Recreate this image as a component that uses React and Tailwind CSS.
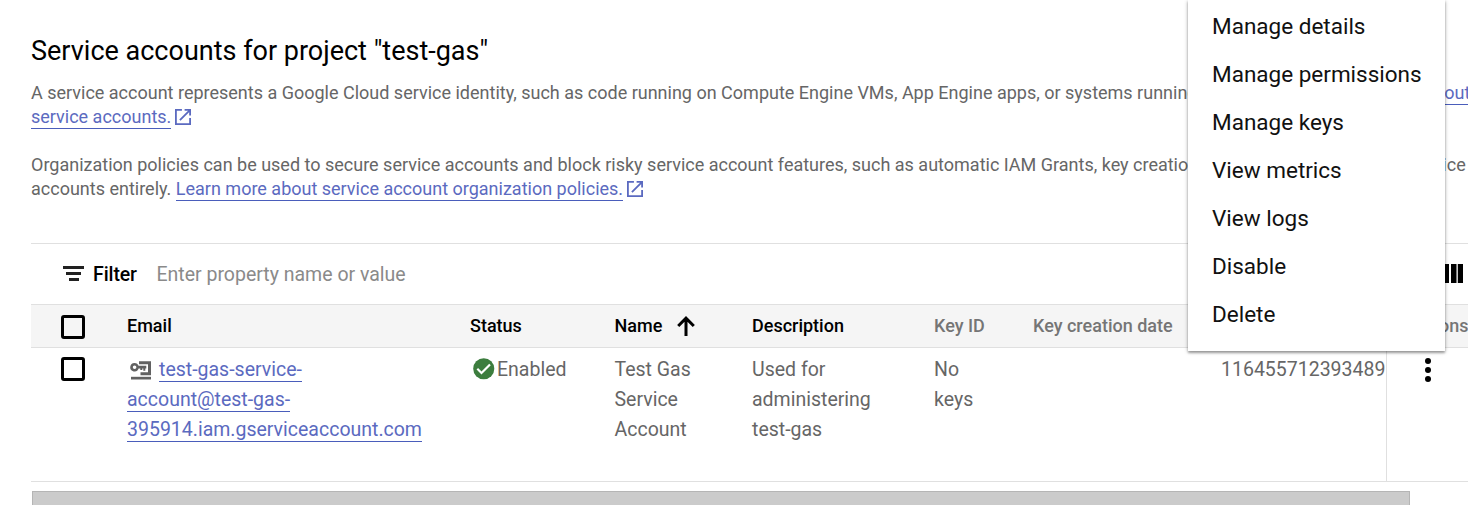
const Link = ({ children }) => (
  <a className="border-b border-[#4a5dbb] pb-px text-[#5b6ac0]">{children}</a>
);

const EmailLink = ({ children }) => (
  <a className="border-b border-[#4a5dbb] text-[#5b6ac0]">{children}</a>
);

const External = () => (
  <svg className="ml-1 inline-block size-[16px] align-[-2px]" viewBox="0 0 15 15" fill="none" stroke="#5b6ac0" strokeWidth="1.7">
    <path d="M6.5 .85H.85v13.3h13.3V8.5M9 .85h5.15V6M14 1L4.6 10.4" />
  </svg>
);

const Checkbox = () => <span className="size-6 shrink-0 rounded-[3px] border-[3px] border-black" />;

const KeyIcon = () => (
  <svg className="mr-[8px] ml-[3px] inline-block h-[19px] w-[21px] align-[-4px]" viewBox="0 0 21 19" fill="#616161">
    <path d="M9 .3h12v14H10.5v-3H18V3.2H9z" />
    <path fillRule="evenodd" d="M4.6 1.9A4.3 4.3 0 0 1 8.6 4.8H16.3v2.8h-1v2.2h-2V7.6h-1v1.500h-2V7.600H8.600A4.300 4.300 0 1 1 4.600 1.900zm0 2.500a1.800 1.800 0 1 0 0 3.600 1.800 1.800 0 0 0 0-3.600z" />
    <path d="M1 15.800h20v2.700H1z" />
  </svg>
);

const COLS = "grid h-full grid-cols-[96px_343px_144.5px_137.5px_182px_99px_188px_165px_1fr]";
const ACTIONS = ["Manage details", "Manage permissions", "Manage keys", "View metrics", "View logs", "Disable", "Delete"];

export default function App() {
  return (
    <div className="relative h-[514px] w-[1468px] overflow-hidden bg-white pl-[31px] font-['Roboto',sans-serif] text-[#666666]">
      <h1 className="pt-[33px] text-[27px] leading-9 text-black">Service accounts for project "test-gas"</h1>
      <div className="mt-3 text-lg leading-6 whitespace-nowrap">
        <p>
          A service account represents a Google Cloud service identity, such as code running on Compute Engine VMs, App Engine apps, or systems running outside Google. <span className="-ml-[3px]"><Link>Learn more about</Link></span>
          <br />
          <Link>service accounts.</Link><External />
        </p>
        <p className="mt-6">
          Organization policies can be used to secure service accounts and block risky service account features, such as automatic IAM Grants, key creation/upload, or the creation of <span className="-ml-px">service</span>
          <br />
          accounts entirely. <Link>Learn more about service account organization policies.</Link><External />
        </p>
      </div>

      <section className="mt-[42px]">
        <div className="flex h-[61px] items-center border-t border-[#e0e0e0] pr-[5px] pl-8 text-[19.5px]">
          <svg className="-mt-0.5 h-[15px] w-[21px]" viewBox="0 0 21 15" fill="#212121">
            <path d="M0 0h21v3H0zM3 6h15v3H3zM6 12h10v3H6z" />
          </svg>
          <span className="mt-px ml-[9px] pt-px font-medium tracking-[-0.1px] text-black">Filter</span>
          <span className="mt-px ml-[19.500px] pt-px text-[#8a8a8a]">Enter property name or value</span>
          <svg className="-mt-0.5 ml-auto h-[19px] w-[26px]" viewBox="0 0 26 19" fill="#000">
            <path d="M0 0h5v19H0zM7 0h5v19H7zM14 0h5.500v19H14zM20.800 0H26v19h-5.200z" />
          </svg>
        </div>
        <div className="h-11 border-y border-[#e0e0e0] bg-[#f5f5f5] text-lg font-medium">
          <div className={COLS + " items-center text-black"}>
            <span className="flex pt-px pl-[30px]"><Checkbox /></span>
            <span>Email</span>
            <span>Status</span>
            <span className="flex items-center">
              Name
              <svg className="-mt-px ml-[15px] h-5 w-[18px]" viewBox="0 0 18 20" fill="none" stroke="#000" strokeWidth="3">
                <path d="M9 20V2.5M1.2 10L9 2.2l7.8 7.8" />
              </svg>
            </span>
            <span>Description</span>
            <span className="text-[#757575]">Key ID</span>
            <span className="text-[#757575]">Key creation date</span>
            <span />
            <span className="pl-[21px] text-[#757575]">Actions</span>
          </div>
        </div>
        <div className="h-[134px] border-b border-[#e0e0e0] text-[19.5px] leading-[30px]">
          <div className={COLS}>
            <span className="flex items-start pt-[9px] pl-[30px]"><Checkbox /></span>
            <div className="pt-[7px] whitespace-nowrap">
              <KeyIcon /><EmailLink>test-gas-service-</EmailLink><br />
              <EmailLink>account@test-gas-</EmailLink><br />
              <EmailLink>395914.iam.gserviceaccount.com</EmailLink>
            </div>
            <div className="flex items-start pt-[7px]">
              <svg className="mt-[3px] mr-[2.500px] ml-[3px] size-[21.500px]" viewBox="0 0 22 22">
                <circle cx="11" cy="11" r="10.8" fill="#3c7d3e" />
                <path d="M4.400 11l4.300 4.300 8.700-8.700" fill="none" stroke="#fff" strokeWidth="2.2" />
              </svg>
              Enabled
            </div>
            <div className="pt-[7px]">Test Gas<br />Service<br />Account</div>
            <div className="pt-[7px]">Used for<br />administering<br />test-gas</div>
            <div className="pt-[7px]">No<br />keys</div>
            <span />
            <div className="overflow-hidden pt-[7px]">116455712393489</div>
            <div className="border-l border-[#e0e0e0] pt-[10px] pl-[38px]">
              <svg className="h-6 w-[6px]" viewBox="0 0 6 24" fill="#000">
                <circle cx="3" cy="3" r="3" /><circle cx="3" cy="12" r="3" /><circle cx="3" cy="21" r="3" />
              </svg>
            </div>
          </div>
        </div>
        <div className="mt-[9px] ml-px h-3.5 w-[1378px] border border-b-0 border-[#b5b5b5] bg-[#cbcbcb]" />
      </section>

      <ul className="absolute top-0 left-[1188px] h-[351px] w-[257px] bg-white pt-0.5 pl-6 text-[22.5px] leading-[48px] text-[#111] shadow-[0_1px_4px_rgba(0,0,0,0.3),0_2px_2px_rgba(0,0,0,0.25)]">
        {ACTIONS.map((a) => <li key={a} className="h-12">{a}</li>)}
      </ul>
    </div>
  );
}
